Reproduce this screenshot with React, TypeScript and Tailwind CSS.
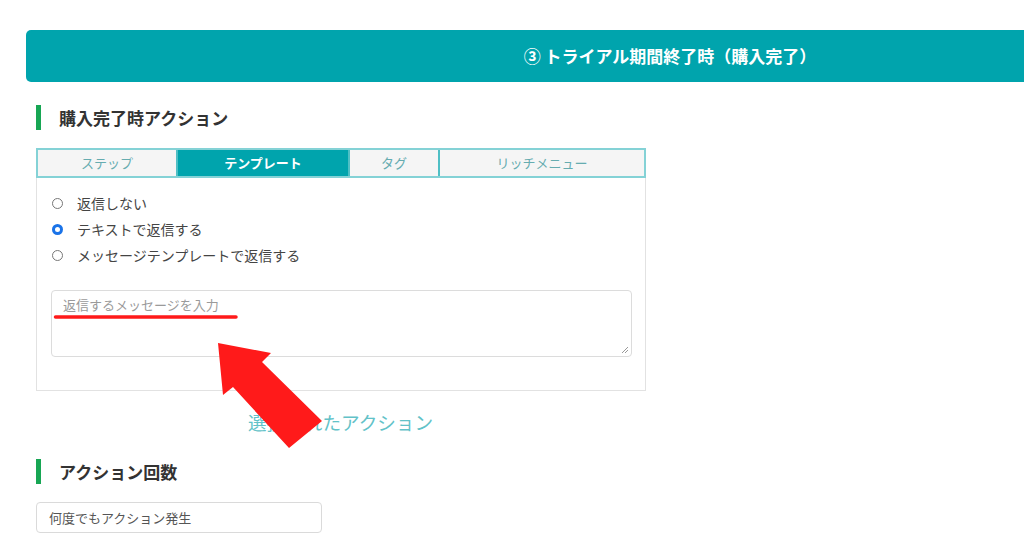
import React from "react";

const jp = { fontFamily: '"Noto Sans CJK JP", "Noto Sans", sans-serif' };

function Radio({ checked, label }: { checked?: boolean; label: string }) {
  return (
    <div className="flex items-center h-[26px]">
      <div className="w-[40px] flex justify-center">
        {checked ? (
          <span className="w-[11px] h-[11px] rounded-full bg-[#1a73e8] flex items-center justify-center">
            <span className="w-[5px] h-[5px] rounded-full bg-white" />
          </span>
        ) : (
          <span className="w-[11px] h-[11px] rounded-full border border-[#777] bg-white" />
        )}
      </div>
      <span className="text-[14px] text-[#444]">{label}</span>
    </div>
  );
}

function Heading({ text }: { text: string }) {
  return (
    <div className="flex items-center h-[25px]">
      <div className="w-[5px] h-[25px] bg-[#17a654]" />
      <span className="ml-[18px] text-[17px] font-bold text-[#333]">{text}</span>
    </div>
  );
}

export default function App() {
  const tabs = [
    { label: "ステップ", w: 140 },
    { label: "テンプレート", w: 172, active: true },
    { label: "タグ", w: 90 },
    { label: "リッチメニュー", w: 208 },
  ];
  return (
    <div className="relative w-[1024px] h-[538px] overflow-hidden bg-white" style={jp}>
      <div className="pt-[30px] pl-[26px]">
        <div className="w-[1288px] h-[52px] rounded-[5px] bg-[#00a4ad] flex items-center justify-center">
          <span className="text-white text-[17px] font-bold">③ トライアル期間終了時（購入完了）</span>
        </div>
      </div>
      <div className="pl-[36px]">
        <div className="mt-[23px]">
          <Heading text="購入完了時アクション" />
        </div>
        <div className="mt-[18px] w-[610px] h-[30px] flex border-2 border-[#84d2d6]">
          {tabs.map((t, i) => (
            <div
              key={t.label}
              className={`flex items-center justify-center text-[13px] ${
                t.active ? "bg-[#00a4ad] text-white font-bold" : "bg-[#f5f5f5] text-[#66acb0]"
              } ${i > 0 ? "border-l-2 border-[#4fbfc5]" : ""}`}
              style={{ width: t.w - (i === 0 ? 2 : 0) - (i === tabs.length - 1 ? 2 : 0) }}
            >
              {t.label}
            </div>
          ))}
        </div>
        <div className="w-[610px] h-[213px] border border-t-0 border-[#e2e2e2] pt-[12px]">
          <Radio label="返信しない" />
          <Radio checked label="テキストで返信する" />
          <Radio label="メッセージテンプレートで返信する" />
          <div className="relative mt-[22px] ml-[14px] w-[581px] h-[67px] border border-[#dcdcdc] rounded-[4px]">
            <span className="absolute left-[11px] top-[4px] text-[13px] text-[#9a9a9a]">返信するメッセージを入力</span>
            <svg className="absolute right-[2px] bottom-[2px]" width="8" height="8" viewBox="0 0 8 8">
              <path d="M7 1 L1 7 M7 4 L4 7" stroke="#999" strokeWidth="1" />
            </svg>
          </div>
        </div>
        <div className="mt-[18px] ml-[212px] h-[26px] flex items-center text-[18.6px] text-[#62c2c8]">
          選択されたアクション
        </div>
        <div className="mt-[24px]">
          <Heading text="アクション回数" />
        </div>
        <div className="mt-[18px] w-[286px] h-[31px] border border-[#dadada] rounded-[4px] flex items-center pl-[12px] text-[13px] text-[#555]">
          何度でもアクション発生
        </div>
      </div>
      <svg className="absolute left-0 top-0 pointer-events-none" width="1024" height="538" viewBox="0 0 1024 538">
        <line x1="55.5" y1="317" x2="236" y2="317" stroke="#ff1a1a" strokeWidth="3.5" strokeLinecap="round" />
        <polygon
          points="218,343 271,353 262,362 322,421 289,448 233,387 223,395"
          fill="#ff1a1a"
        />
      </svg>
    </div>
  );
}
